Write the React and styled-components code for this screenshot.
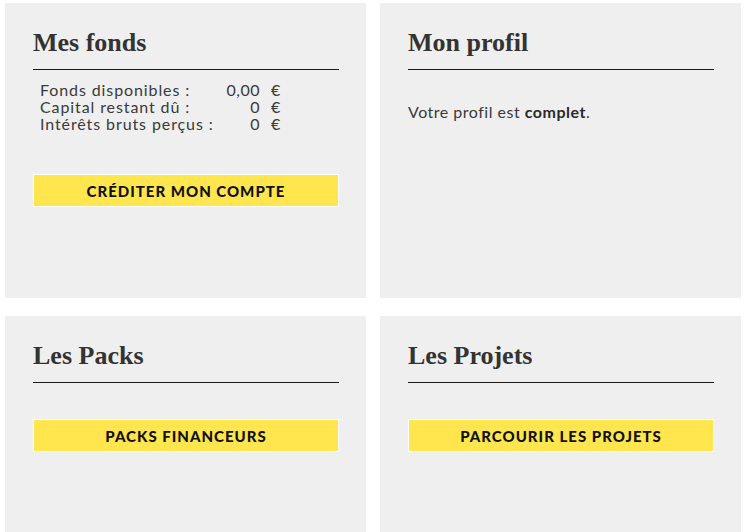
import React from "react";
import styled, { createGlobalStyle } from "styled-components";

const GlobalStyle = createGlobalStyle`
  body {
    margin: 0;
    background: #fff;
    font-family: Lato, "Open Sans", sans-serif;
    color: #333;
  }
`;

const Grid = styled.div`
  display: grid;
  grid-template-columns: 361px 361px;
  column-gap: 14px;
  row-gap: 18px;
  padding: 3px 0 0 5px;
`;

const Card = styled.section`
  background: #efefef;
  height: 295px;
  padding: 26px 27px 0 28px;
  box-sizing: border-box;
`;

const Title = styled.h2`
  margin: 0;
  font-family: "Liberation Serif", "Times New Roman", serif;
  font-weight: 700;
  font-size: 26px;
  line-height: 28px;
  color: #333;
  padding-bottom: 12px;
  border-bottom: 1px solid #1a1a1a;
`;

const Funds = styled.div`
  display: grid;
  grid-template-columns: 185px 35px auto;
  margin: 11px 0 0 7px;
  font-size: 16px;
  line-height: 17px;
  letter-spacing: 0.9px;
  color: #3a3a3a;
`;

const Amount = styled.span`
  text-align: right;
  letter-spacing: 0.5px;
`;

const Currency = styled.span`
  padding-left: 11px;
`;

const Text = styled.p`
  margin: 33px 0 0;
  font-size: 16px;
  line-height: 17px;
  letter-spacing: 0.5px;
  color: #3a3a3a;

  strong {
    font-weight: 700;
    color: #2a2a2a;
  }
`;

const Button = styled.a`
  display: flex;
  align-items: center;
  justify-content: center;
  height: 33px;
  box-sizing: border-box;
  margin-top: ${props => props.$offset}px;
  background: #ffe54e;
  border: 1px solid #fff;
  color: #111;
  font-family: Lato, sans-serif;
  font-weight: 900;
  font-size: 15px;
  letter-spacing: 1px;
  text-transform: uppercase;
  text-decoration: none;
`;

const funds = [
  ["Fonds disponibles :", "0,00"],
  ["Capital restant dû :", "0"],
  ["Intérêts bruts perçus :", "0"],
];

const App = () => (
  <>
    <GlobalStyle />
    <Grid>
      <Card>
        <Title>Mes fonds</Title>
        <Funds>
          {funds.map(([label, value]) => (
            <React.Fragment key={label}>
              <span>{label}</span>
              <Amount>{value}</Amount>
              <Currency>€</Currency>
            </React.Fragment>
          ))}
        </Funds>
        <Button href="#" $offset={42}>Créditer mon compte</Button>
      </Card>
      <Card>
        <Title>Mon profil</Title>
        <Text>
          Votre profil est <strong>complet</strong>.
        </Text>
      </Card>
      <Card>
        <Title>Les Packs</Title>
        <Button href="#" $offset={36}>Packs financeurs</Button>
      </Card>
      <Card>
        <Title>Les Projets</Title>
        <Button href="#" $offset={36}>Parcourir les projets</Button>
      </Card>
    </Grid>
  </>
);

export default App;
